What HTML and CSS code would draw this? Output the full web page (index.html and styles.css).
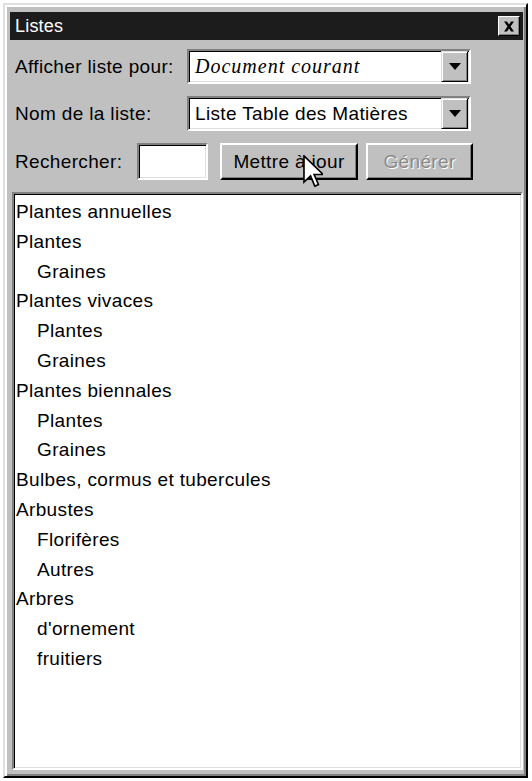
FILE: index.html
```html
<!DOCTYPE html>
<html lang="fr">
<head>
<meta charset="utf-8">
<title>Listes</title>
<link rel="stylesheet" href="styles.css">
</head>
<body>
<div class="window">
  <div class="titlebar">
    <span class="title">Listes</span>
    <button class="close" aria-label="Fermer">
      <svg width="12" height="11" viewBox="0 0 12 11"><path d="M1 0.5h3l2 3 2-3h3L7.5 5.5 11 10.5H8L6 7.5 4 10.5H1L4.5 5.5z" fill="#000"/></svg>
    </button>
  </div>
  <div class="form">
    <div class="row">
      <span class="label label-wide">Afficher liste pour:</span>
      <div class="combo">
        <span class="combo-text italic">Document courant</span>
        <span class="drop"><svg width="12" height="7" viewBox="0 0 12 7"><path d="M0 0h12L6 7z" fill="#000"/></svg></span>
      </div>
    </div>
    <div class="row">
      <span class="label label-wide">Nom de la liste:</span>
      <div class="combo">
        <span class="combo-text">Liste Table des Matières</span>
        <span class="drop"><svg width="12" height="7" viewBox="0 0 12 7"><path d="M0 0h12L6 7z" fill="#000"/></svg></span>
      </div>
    </div>
    <div class="row row-search">
      <span class="label label-search">Rechercher:</span>
      <div class="input"></div>
      <button class="btn btn-update">Mettre à jour
        <svg class="cursor" width="20" height="32" viewBox="0 0 12 19.5"><path d="M0.5 0.5v16l4-3.8 2.6 6.3 2.2-1-2.6-6.1h5.5z" fill="#fff" stroke="#000" stroke-width="1"/></svg>
      </button>
      <button class="btn btn-gen" disabled>Générer</button>
    </div>
  </div>
  <div class="list">
    <div class="item">Plantes annuelles</div>
    <div class="item">Plantes</div>
    <div class="item sub">Graines</div>
    <div class="item">Plantes vivaces</div>
    <div class="item sub">Plantes</div>
    <div class="item sub">Graines</div>
    <div class="item">Plantes biennales</div>
    <div class="item sub">Plantes</div>
    <div class="item sub">Graines</div>
    <div class="item">Bulbes, cormus et tubercules</div>
    <div class="item">Arbustes</div>
    <div class="item sub">Florifères</div>
    <div class="item sub">Autres</div>
    <div class="item">Arbres</div>
    <div class="item sub">d'ornement</div>
    <div class="item sub">fruitiers</div>
  </div>
</div>
</body>
</html>
```
FILE: styles.css
```css
* { box-sizing: border-box; }
html, body { margin: 0; padding: 0; background: #fff; }
body {
  font-family: "Liberation Sans", Arial, sans-serif;
  font-size: 19px;
  letter-spacing: 0.35px;
  color: #000;
}
.window {
  margin: 3px 0 0 3px;
  width: 525px;
  height: 775px;
  background: #c0c0c0;
  border: 2px solid;
  border-color: #dfdfdf #000 #000 #dfdfdf;
  box-shadow: inset 2px 2px #fff, inset -2px -2px #808080;
  padding: 7px 3px 6px 5px;
  display: flex;
  flex-direction: column;
}
.titlebar {
  height: 28px;
  background: #1c1c1c;
  color: #fff;
  display: flex;
  align-items: center;
  justify-content: space-between;
  padding: 0 3px 0 5px;
  flex: none;
}
.title { font-size: 18px; letter-spacing: 0.2px; }
.close {
  width: 22px;
  height: 20px;
  padding: 0;
  background: #c0c0c0;
  border: 1px solid;
  border-color: #fff #000 #000 #fff;
  box-shadow: inset -1px -1px #808080;
  display: flex;
  align-items: center;
  justify-content: center;
}
.form {
  display: flex;
  flex-direction: column;
  gap: 12px;
  padding: 9px 0 0 5px;
  flex: none;
}
.row { display: flex; align-items: center; }
.label { white-space: nowrap; }
.label-wide { width: 172px; }
.label-search { width: 122px; }
.combo {
  width: 284px;
  height: 35px;
  background: #fff;
  border: 2px solid;
  border-color: #808080 #fff #fff #808080;
  box-shadow: inset 1px 1px #000, inset -1px -1px #dfdfdf;
  display: flex;
  align-items: center;
  justify-content: space-between;
  padding: 0 1px 0 6px;
}
.combo-text { white-space: nowrap; }
.italic {
  font-family: "Liberation Serif", "Times New Roman", serif;
  font-style: italic;
  font-size: 20px;
  letter-spacing: 1px;
}
.drop {
  width: 27px;
  height: 31px;
  background: #c0c0c0;
  border: 1px solid;
  border-color: #dfdfdf #000 #000 #dfdfdf;
  box-shadow: inset 1px 1px #fff, inset -1px -1px #808080;
  display: flex;
  align-items: center;
  justify-content: center;
}
.row-search { height: 37px; }
.input {
  width: 71px;
  height: 37px;
  background: #fff;
  border: 2px solid;
  border-color: #808080 #fff #fff #808080;
  box-shadow: inset 1px 1px #000, inset -1px -1px #dfdfdf;
  margin-right: 12px;
}
.btn {
  height: 37px;
  background: #c0c0c0;
  font-family: "Liberation Sans", Arial, sans-serif;
  font-size: 19px;
  letter-spacing: 0.35px;
  color: #000;
  padding: 0;
  border: 2px solid;
  border-color: #fff #000 #000 #fff;
  box-shadow: inset -1px -1px #808080;
}
.btn-update { width: 138px; position: relative; margin-right: 8px; }
.btn-gen { width: 107px; color: #8a8a8a; text-shadow: 1px 1px #fff; }
.cursor { position: absolute; left: 81px; top: 10px; }
.list {
  margin: 12px 0 0 2px;
  flex: 1;
  background: #fff;
  border: 2px solid;
  border-color: #808080 #fff #fff #808080;
  box-shadow: inset 1px 1px #000, inset -1px -1px #dfdfdf;
  padding: 3px 0 0 2px;
}
.item { height: 29.8px; line-height: 29.8px; white-space: nowrap; }
.sub { padding-left: 21px; }
```
